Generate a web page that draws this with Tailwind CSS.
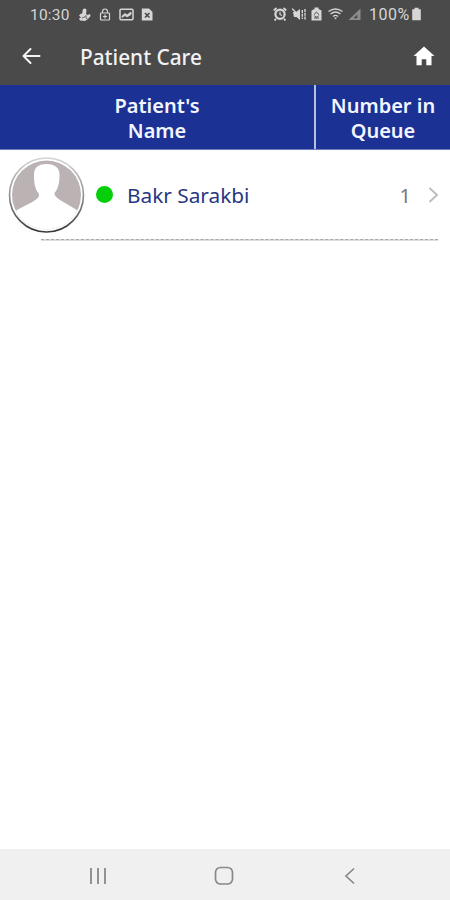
<!DOCTYPE html>
<html lang="en">
<head>
<meta charset="utf-8">
<title>Patient Care</title>
<script src="https://cdn.jsdelivr.net/npm/@tailwindcss/browser@4"></script>
</head>
<body class="bg-white">
<div class="flex h-[900px] w-[450px] flex-col overflow-hidden bg-white font-['Noto_Sans',sans-serif]">
  <header class="h-[85px] bg-[#4a4a4a] text-[#f2f2f2]">
    <div class="flex h-7 items-center pl-[30px] font-[Roboto,sans-serif] text-[15.5px] text-[#d6d6d6]">
      <span class="w-[48px] whitespace-nowrap pt-[3px] tracking-[0.2px]">10:30</span>
      <svg class="h-[13px] w-[13px]" viewBox="0 0 13 13" fill="currentColor"><path d="M5 1q3-1.500 3.500 1L8 6l1.500 1L12 6l.5 2-2.500 3-3 2-5-.5-1-2 2-1-2-2 2-2 1 .5z"/><path d="M4 10l3.500-1.500M8 7v3l1.500 1" stroke="#4a4a4a" stroke-width=".8" fill="none"/></svg>
      <svg class="ml-2 h-[13px] w-[12px]" viewBox="0 0 12 13" fill="none" stroke="currentColor" stroke-width="1.200"><rect x="1.500" y="5" width="9" height="7" rx=".5"/><path d="M3.500 5V3.500a2.500 2.500 0 0 1 5 0V5M6 6.500v4M4 8.500h4"/></svg>
      <svg class="ml-2 h-[13px] w-[15px]" viewBox="0 0 15 13" fill="none" stroke="currentColor" stroke-width="1.500"><rect x="1" y="1.200" width="13" height="10.600" rx="1"/><path d="M3 8l3-2.500 2 1.500 4-3v2.500L8 9 6 7.500 3 9.500z" fill="currentColor" stroke-width=".8"/></svg>
      <svg class="ml-[7px] h-[13px] w-[12px]" viewBox="0 0 12 13"><path d="M.8.5H8l3.500 3.500v8.500H.8z" fill="currentColor"/><path d="M4 5l4.500 4.500M8.500 5L4 9.500" stroke="#4a4a4a" stroke-width="1.600"/></svg>
      <svg class="ml-[120px] h-[14px] w-[14px]" viewBox="0 0 14 14"><path d="M.8 3.500L3.500 1M13.200 3.500L10.500 1M3 12l-1.500 1.500M11 12l1.500 1.500" stroke="currentColor" stroke-width="1.800"/><circle cx="7" cy="7.300" r="4.600" fill="none" stroke="currentColor" stroke-width="2.200"/><path d="M7 4.800v2.700l2 1" stroke="currentColor" stroke-width="1.200" fill="none"/></svg>
      <svg class="ml-[5px] h-[13px] w-[14px]" viewBox="0 0 14 13"><path d="M1 4h3l4-3v11L4.500 9H2z" fill="currentColor"/><path d="M0 .5l4 4" stroke="currentColor" stroke-width="1.300"/><path d="M10.300 2v9M13 1v11" stroke="currentColor" stroke-width="1.400" stroke-dasharray="3 .8"/></svg>
      <svg class="ml-[5px] h-[14px] w-[11px]" viewBox="0 0 11 14"><path d="M3.500.5h4V2L10.500 3.500v10H.5v-10L3.500 2z" fill="currentColor"/><path d="M3 7.500l2.500-2.300L8 7.500M3.200 8.500A2.500 2.500 0 0 0 7.800 8.500M3 11h5" stroke="#4a4a4a" stroke-width="1" fill="none"/></svg>
      <svg class="ml-[5px] h-[13px] w-[17px]" viewBox="0 0 17 13" fill="none" stroke="currentColor" stroke-width="1.300"><path d="M1.500 3.500Q8.500-1.500 15.500 3.500M3.500 6Q8.500 2 13.500 6M6 8.500Q8.500 6.400 11 8.500"/><path d="M7 9.600h3l-1.500 1.900z" fill="currentColor" stroke="none"/></svg>
      <svg class="ml-[4px] h-[13px] w-[13px] text-[#8c8c8c]" viewBox="0 0 13 13"><path d="M.5 12L12.500.5V12z" fill="currentColor"/><path d="M5.500 10.200l3.800-3.800v3.800z" fill="#4a4a4a"/></svg>
      <span class="ml-[8px] w-[42px] whitespace-nowrap pt-[2px] text-[16px] tracking-[0.5px]">100%</span>
      <svg class="h-[14px] w-[11px]" viewBox="0 0 11 14" fill="currentColor"><path d="M3.500.8h4v1.500h2.300V13.300H1.200v-11h2.300z"/></svg>
    </div>
    <div class="flex h-[57px] items-center pl-[21px] pr-[14px]">
      <svg class="h-5 w-5" viewBox="0 0 20 20" fill="none" stroke="#f4f4f4" stroke-width="2" stroke-linecap="round" stroke-linejoin="round"><path d="M18.500 9H2.500M9.500 2L2.500 9l7 7"/></svg>
      <h1 class="ml-[39px] whitespace-nowrap pt-[2px] text-[20.800px] font-medium">Patient Care</h1>
      <svg class="ml-auto h-[22px] w-[24px]" viewBox="0 0 24 22" fill="white"><path d="M12 .5l10.500 9.500h-3v9.200h-5.200v-6H9.700v6H4.500V10h-3z"/></svg>
    </div>
  </header>
  <div class="flex h-[65px] border-b border-[#6e7bbb] bg-[#1b3194] text-center text-[20px] font-semibold leading-[25px] text-[#f3f5ff]">
    <div class="w-[314px] pt-[8px]">Patient's<br>Name</div>
    <div class="w-[2px] bg-[#b8c0df]"></div>
    <div class="flex-1 pt-[8px]">Number in<br>Queue</div>
  </div>
  <main class="flex-1">
    <div class="flex h-[90px] items-center pl-2 pr-[11px]">
      <svg class="h-[78px] w-[78px]" viewBox="0 0 78 78">
        <defs><linearGradient id="ring" x1="0" y1="0" x2="0" y2="1"><stop offset="0" stop-color="#d4d4d4"/><stop offset=".5" stop-color="#929292"/><stop offset="1" stop-color="#383838"/></linearGradient><clipPath id="face"><circle cx="38.500" cy="39" r="34.500"/></clipPath></defs>
        <circle cx="38.500" cy="39" r="37" fill="white" stroke="url(#ring)" stroke-width="1.600"/>
        <g clip-path="url(#face)"><path d="M0 0h78v78H0z" fill="#bbb3b3"/><path d="M38.500 8c-9 0-12.500 4-12.500 11 0 8 1 14 4.500 18 1 3 .5 4.500-2.500 6.500-6 4.500-12 6-18 10L0 60v18h78V60l-10-6.500c-6-4-10-5.500-16-9.500-4-3-5.500-4-5.500-7 3.500-4 5-10 5-18 0-7-4-11-13-11z" fill="white"/></g>
      </svg>
      <span class="-mt-[2px] ml-[10px] h-[17px] w-[17px] rounded-full bg-[#04cf08]"></span>
      <span class="ml-[14px] whitespace-nowrap pt-[2px] text-[20.800px] text-[#293783]">Bakr Sarakbi</span>
      <span class="ml-auto pt-px text-[20px] text-[#777]">1</span>
      <svg class="ml-[17px] h-[16px] w-[11px]" viewBox="0 0 11 16" fill="none" stroke="#bcbcbc" stroke-width="1.800"><path d="M1.500 1l7.500 7-7.500 7"/></svg>
    </div>
    <div class="-mt-px ml-[41px] mr-3 h-[2px] bg-[#dedede]"><div class="border-t border-dashed border-[#a8a8a8]"></div></div>
  </main>
  <nav class="flex h-[51px] items-center bg-[#f0f0f0] pl-[89px] pt-[3px] text-[#888]">
    <svg class="h-[18px] w-[18px]" viewBox="0 0 18 18" stroke="currentColor" stroke-width="1.800"><path d="M2 1v16M9 1v16M16 1v16"/></svg>
    <svg class="ml-[107px] h-[20px] w-[20px]" viewBox="0 0 20 20" fill="none" stroke="currentColor" stroke-width="1.700"><rect x="1.500" y="1.500" width="17" height="16.500" rx="5"/></svg>
    <svg class="ml-[110px] h-[18px] w-[12px]" viewBox="0 0 12 18" fill="none" stroke="currentColor" stroke-width="1.700"><path d="M10 1.500L2 9l8 7.500"/></svg>
  </nav>
</div>
</body>
</html>
